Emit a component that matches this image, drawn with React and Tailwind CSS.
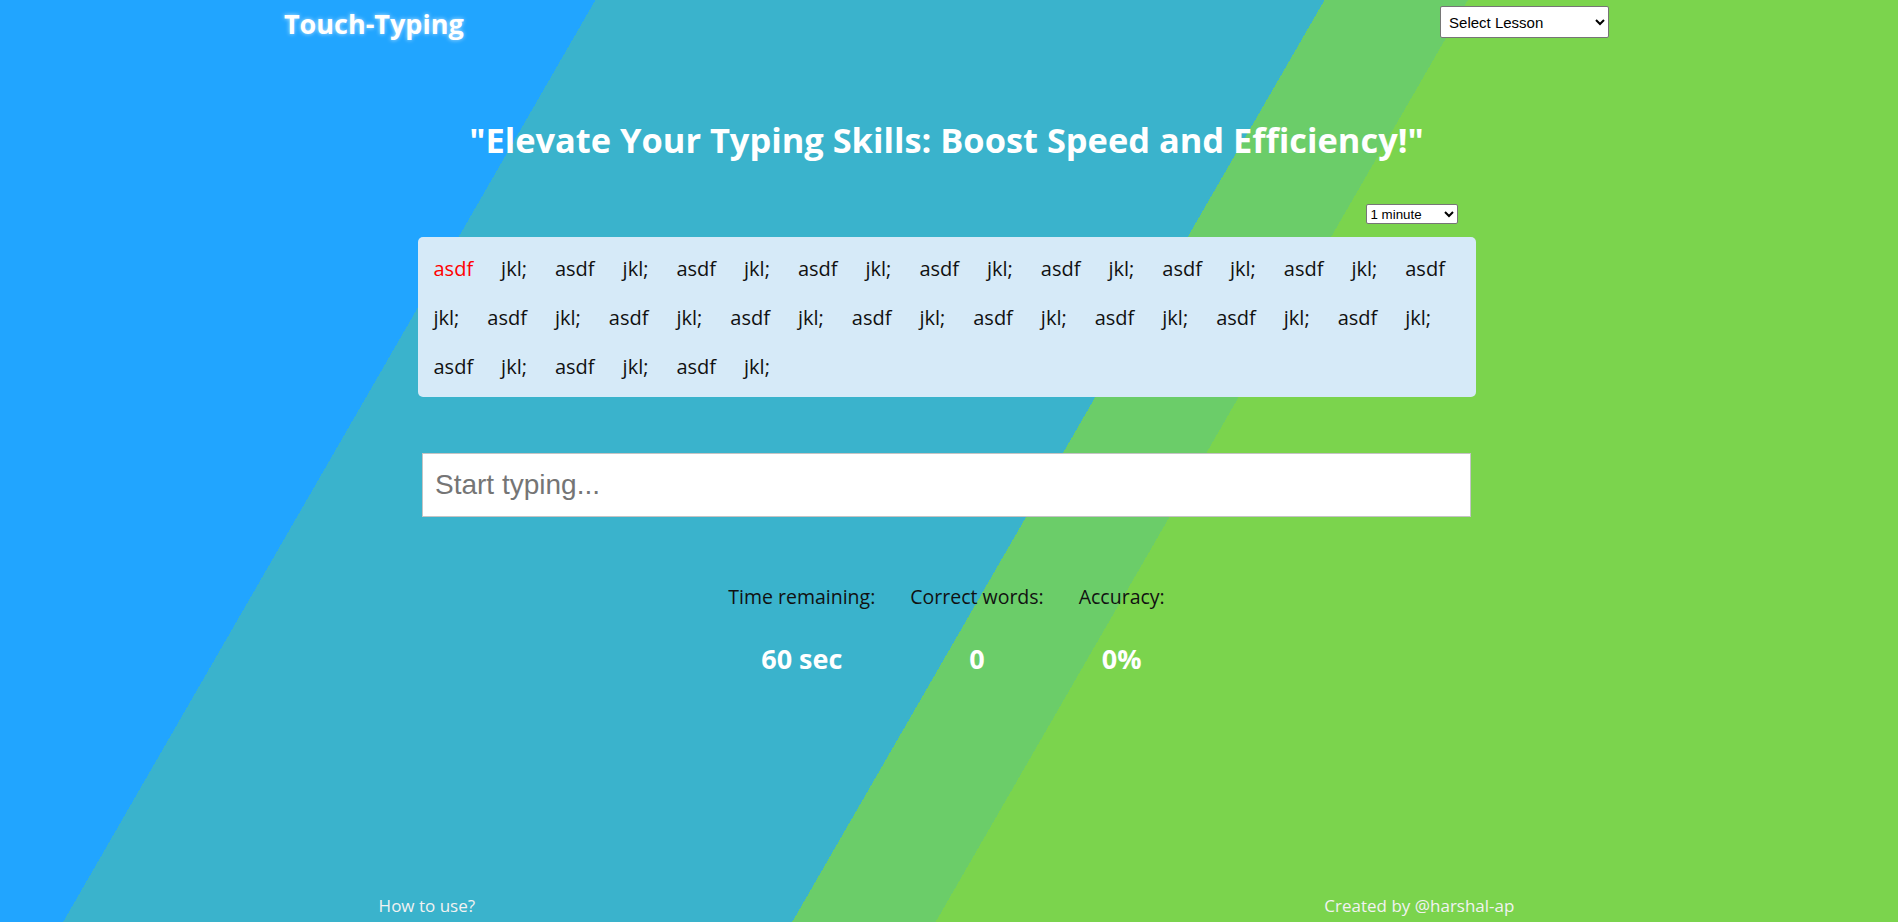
import React, { useState } from 'react';

const words = Array.from({ length: 40 }, (_, i) => (i % 2 === 0 ? 'asdf' : 'jkl;'));

const Stat = ({ label, value }) => (
    <div className="flex flex-col items-center">
        <span className="text-[19.5px] leading-[27px] text-[#111]">{label}</span>
        <span className="mt-[31px] text-[27px] leading-[36px] font-bold text-white">{value}</span>
    </div>
);

export default function App() {
    const [typed, setTyped] = useState('');
    const current = 0;

    return (
        <div
            className="min-h-screen flex flex-col pr-[5px] bg-[linear-gradient(120deg,#21a5ff_24.5%,#3ab3cc_24.5%,#3ab3cc_54.5%,#6bcd69_54.5%,#6bcd69_60.4%,#7bd44d_60.4%)]"
            style={{ fontFamily: '"Open Sans", "Noto Sans", sans-serif' }}
        >
            {/* Header */}
            <header className="flex items-start justify-between px-[15%] h-[44px]">
                <h1 className="mt-[7px] text-[27px] leading-[34px] font-bold text-white [text-shadow:0_0_4px_rgba(255,255,255,0.7)]">
                    Touch-Typing
                </h1>
                <select
                    className="mt-[6px] h-[32px] w-[169px] bg-white border border-[#767676] rounded-[2px] px-1 text-[15px] text-black"
                    style={{ fontFamily: '"Liberation Sans", Arial, sans-serif' }}
                    defaultValue=""
                >
                    <option value="">Select Lesson</option>
                    <option value="1">Lesson 1</option>
                    <option value="2">Lesson 2</option>
                </select>
            </header>

            <main className="flex flex-col items-center">
                <h2 className="mt-[75px] text-[34.4px] leading-[41px] font-bold text-white">
                    "Elevate Your Typing Skills: Boost Speed and Efficiency!"
                </h2>

                <div className="w-[1058px] flex justify-end mt-[44px] pr-[18px]">
                    <select
                        className="h-[20px] w-[92px] bg-white border border-[#767676] rounded-[2px] text-[13.33px] text-black"
                        style={{ fontFamily: '"Liberation Sans", Arial, sans-serif' }}
                        defaultValue="1"
                    >
                        <option value="1">1 minute</option>
                        <option value="2">2 minutes</option>
                        <option value="5">5 minutes</option>
                    </select>
                </div>

                {/* Words */}
                <div className="mt-[13px] w-[1058px] h-[160px] bg-[#d6eaf8] rounded-[5px] px-4 py-[6.5px] flex flex-wrap content-start gap-x-[28px]">
                    {words.map((w, i) => (
                        <span
                            key={i}
                            className={`text-[20px] leading-[49px] ${i === current ? 'text-[#ff0000]' : 'text-[#111]'}`}
                        >
                            {w}
                        </span>
                    ))}
                </div>

                <input
                    type="text"
                    value={typed}
                    onChange={(e) => setTyped(e.target.value)}
                    placeholder="Start typing..."
                    className="mt-[56px] w-[1049px] h-[64px] bg-white border border-[#c4c4c4] pl-3 text-[28px] text-black placeholder:text-[#757575] outline-none"
                    style={{ fontFamily: '"Liberation Sans", Arial, sans-serif' }}
                />

                <div className="mt-[66px] flex justify-center gap-[35px]">
                    <Stat label="Time remaining:" value="60 sec" />
                    <Stat label="Correct words:" value="0" />
                    <Stat label="Accuracy:" value="0%" />
                </div>
            </main>

            {/* Footer */}
            <footer className="mt-auto flex justify-between px-[20%] pb-[4px] text-[17px] leading-[24px] text-[#f2f2f2]">
                <a href="#" className="hover:underline">How to use?</a>
                <span>Created by @harshal-ap</span>
            </footer>
        </div>
    );
}
